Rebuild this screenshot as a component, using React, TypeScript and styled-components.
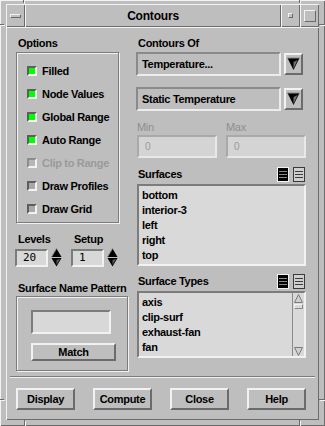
import React from "react";
import styled, { createGlobalStyle, css } from "styled-components";

const BG = "#bebebe";
const LIGHT = "#f2f2f2";
const DARK = "#6b6b6b";
const FIELD = "#d8d8d8";

const GlobalStyle = createGlobalStyle`
  html, body { margin: 0; padding: 0; background: ${BG}; }
  body { font-family: "Liberation Sans", Arial, sans-serif; }
`;

const sunken = css`
  box-sizing: border-box;
  border: 2px solid;
  border-color: #7c7c7c ${LIGHT} ${LIGHT} #7c7c7c;
`;

const raised = css`
  box-sizing: border-box;
  border: 2px solid;
  border-color: ${LIGHT} ${DARK} ${DARK} ${LIGHT};
`;

const Window = styled.div`
  position: relative;
  box-sizing: border-box;
  width: 325px;
  height: 426px;
  padding: 4px 6px 6px 6px;
  background: ${BG};
  display: flex;
  flex-direction: column;
  box-shadow: inset 1px 1px 0 ${LIGHT}, inset -1px -1px 0 ${DARK};
  font-family: "Liberation Sans", Arial, sans-serif;
  font-size: 11px;
  font-weight: bold;
  letter-spacing: -0.3px;
  color: #000;
`;

const FrameMark = styled.div<{ $l: number; $t: number; $w: number; $h: number }>`
  position: absolute;
  left: ${(p) => p.$l}px;
  top: ${(p) => p.$t}px;
  width: ${(p) => p.$w}px;
  height: ${(p) => p.$h}px;
  background: ${LIGHT};
  box-shadow: -1px -1px 0 ${DARK};
`;

const TitleBar = styled.div`
  display: flex;
  height: 23px;
  flex: none;
`;

const TitleCell = styled.div<{ $w?: number }>`
  box-sizing: border-box;
  ${(p) => (p.$w ? `width: ${p.$w}px; flex: none;` : "flex: 1;")}
  display: flex;
  align-items: center;
  justify-content: center;
  box-shadow: inset 1px 1px 0 ${LIGHT}, inset -1px -1px 0 ${DARK};
`;

const TitleText = styled.span`
  font-size: 12px;
  letter-spacing: -0.2px;
`;

const MenuGlyph = styled.span`
  box-sizing: border-box;
  width: 11px;
  height: 4px;
  border: 1px solid;
  border-color: ${LIGHT} ${DARK} ${DARK} ${LIGHT};
`;

const MinGlyph = styled.span`
  box-sizing: border-box;
  width: 5px;
  height: 5px;
  border: 1px solid;
  border-color: ${LIGHT} ${DARK} ${DARK} ${LIGHT};
`;

const MaxGlyph = styled.span`
  box-sizing: border-box;
  width: 12px;
  height: 12px;
  border: 1px solid;
  border-color: ${LIGHT} ${DARK} ${DARK} ${LIGHT};
`;

const Content = styled.div`
  flex: 1;
  display: flex;
  flex-direction: column;
  padding: 10px 13px 10px 10px;
  box-shadow: inset 1px 1px 0 ${LIGHT}, inset -1px -1px 0 ${DARK};
`;

const Main = styled.div`
  display: flex;
  gap: 8px;
`;

const LeftCol = styled.div`
  width: 112px;
  display: flex;
  flex-direction: column;
`;

const RightCol = styled.div`
  width: 170px;
  display: flex;
  flex-direction: column;
`;

const Label = styled.div<{ $mt?: number; $dim?: boolean }>`
  height: 13px;
  line-height: 13px;
  padding-left: 2px;
  white-space: nowrap;
  margin-top: ${(p) => p.$mt ?? 0}px;
  color: ${(p) => (p.$dim ? "#8e8e8e" : "#000")};
`;

const GroupFrame = styled.div<{ $w: number; $mt?: number }>`
  box-sizing: border-box;
  width: ${(p) => p.$w}px;
  margin-top: ${(p) => p.$mt ?? 0}px;
  border: 1px solid #7c7c7c;
  box-shadow: inset 1px 1px 0 ${LIGHT}, 1px 1px 0 ${LIGHT};
`;

const OptionsBody = styled.div`
  padding: 6px 0 2px 10px;
  display: flex;
  flex-direction: column;
`;

const CheckRow = styled.div<{ $disabled?: boolean }>`
  height: 23px;
  display: flex;
  align-items: center;
  gap: 5px;
  color: ${(p) => (p.$disabled ? "#9a9a9a" : "#000")};
`;

const CheckBox = styled.span<{ $on: boolean; $disabled?: boolean }>`
  box-sizing: border-box;
  width: 10px;
  height: 10px;
  flex: none;
  border: 2px solid;
  border-color: ${(p) =>
    p.$disabled
      ? `#8c8c8c ${LIGHT} ${LIGHT} #8c8c8c`
      : `#5e5e5e ${LIGHT} ${LIGHT} #5e5e5e`};
  background: ${(p) => (p.$on ? "#00ff00" : p.$disabled ? "#b6b6b6" : "#a8a8a8")};
`;

const SpinArea = styled.div`
  display: flex;
  gap: 10px;
  margin-top: 10px;
`;

const SpinGroup = styled.div`
  display: flex;
  flex-direction: column;
  gap: 2px;
`;

const SpinRow = styled.div`
  display: flex;
  align-items: center;
  gap: 3px;
  margin-left: -1px;
`;

const NumField = styled.div`
  ${sunken};
  width: 33px;
  height: 18px;
  background: ${FIELD};
  font-family: "DejaVu Sans Mono", "Liberation Mono", monospace;
  font-weight: normal;
  font-size: 11px;
  letter-spacing: 0;
  line-height: 14px;
  padding-left: 6px;
`;

const PatternBody = styled.div`
  padding: 13px 0 9px 14px;
  display: flex;
  flex-direction: column;
  gap: 9px;
`;

const TextField = styled.div`
  ${sunken};
  width: 80px;
  height: 24px;
  background: ${FIELD};
`;

const PushButton = styled.div<{ $w: number; $h: number }>`
  ${raised};
  width: ${(p) => p.$w}px;
  height: ${(p) => p.$h}px;
  display: flex;
  align-items: center;
  justify-content: center;
  background: ${BG};
`;

const OptionRow = styled.div<{ $mt?: number }>`
  display: flex;
  align-items: center;
  gap: 3px;
  margin-top: ${(p) => p.$mt ?? 0}px;
`;

const OptionField = styled.div`
  ${sunken};
  border-color: #8a8a8a #ececec #ececec #8a8a8a;
  width: 145px;
  height: 24px;
  padding-left: 4px;
  display: flex;
  align-items: center;
`;

const ArrowButton = styled.div`
  ${raised};
  width: 19px;
  height: 22px;
  display: flex;
  align-items: center;
  justify-content: center;
`;

const RangeRow = styled.div`
  display: flex;
  gap: 9px;
  margin-top: 10px;
  padding-left: 1px;
`;

const RangeGroup = styled.div`
  display: flex;
  flex-direction: column;
  gap: 1px;
`;

const RangeLabel = styled.div`
  height: 13px;
  line-height: 13px;
  color: #8e8e8e;
  font-weight: normal;
`;

const RangeField = styled.div`
  box-sizing: border-box;
  width: 80px;
  height: 23px;
  border: 2px solid;
  border-color: #a9a9a9 #e8e8e8 #e8e8e8 #a9a9a9;
  background: #d4d4d4;
  color: #9a9a9a;
  font-weight: normal;
  font-size: 10px;
  line-height: 19px;
  padding-left: 6px;
`;

const ListHeader = styled.div<{ $mt: number }>`
  display: flex;
  align-items: center;
  height: 16px;
  margin-top: ${(p) => p.$mt}px;
  padding-left: 2px;
`;

const HeaderLabel = styled.span`
  flex: 1;
`;

const IconGroup = styled.div`
  display: flex;
  gap: 4px;
  margin-right: 1px;
`;

const ListBox = styled.div<{ $h: number }>`
  ${sunken};
  margin-top: 2px;
  margin-left: 1px;
  width: 169px;
  height: ${(p) => p.$h}px;
  background: #d9d9d9;
  display: flex;
`;

const ListItems = styled.div`
  flex: 1;
  padding: 2px 0 0 3px;
`;

const ListItem = styled.div`
  height: 15px;
  line-height: 15px;
  white-space: nowrap;
`;

const ScrollBar = styled.div`
  width: 11px;
  border-left: 1px solid #8a8a8a;
  display: flex;
  flex-direction: column;
  align-items: center;
  padding-top: 1px;
`;

const Thumb = styled.div`
  box-sizing: border-box;
  width: 9px;
  height: 5px;
  margin-top: 1px;
  border: 1px solid;
  border-color: ${LIGHT} #8a8a8a #8a8a8a ${LIGHT};
`;

const ScrollSpacer = styled.div`
  flex: 1;
`;

const Separator = styled.div`
  margin: auto -9px 0 -6px;
  height: 0;
  border-top: 1px solid #7c7c7c;
  border-bottom: 1px solid ${LIGHT};
`;

const ButtonRow = styled.div`
  display: flex;
  justify-content: space-between;
  margin-top: 10px;
`;

const DownArrow = () => (
  <svg width="13" height="14" viewBox="0 0 13 14">
    <polygon points="0.5,1 12.5,1 6.5,13" fill="#000" />
    <polygon points="6.5,5 10.5,3 6.5,12" fill="#6e6e6e" />
    <line x1="0.5" y1="1" x2="12.5" y2="1" stroke="#8a8a8a" strokeWidth="1" />
  </svg>
);

const SpinArrows = () => (
  <svg width="11" height="19" viewBox="0 0 11 19">
    <polygon points="5.5,0.5 10.5,9 0.5,9" fill="#000" />
    <line x1="5.5" y1="0.5" x2="0.5" y2="9" stroke="#8a8a8a" strokeWidth="1" />
    <polygon points="0.5,10 10.5,10 5.5,18.5" fill="#000" />
    <polygon points="5.5,12 9,11 5.5,17" fill="#5a5a5a" />
  </svg>
);

const SelectAllIcon = () => (
  <svg width="12" height="15" viewBox="0 0 12 15">
    <rect x="0" y="0" width="12" height="15" fill="#f2f2f2" />
    <rect x="1" y="1" width="10" height="13" fill="#000" />
    <line x1="2" y1="4.5" x2="10" y2="4.5" stroke="#8a8a8a" />
    <line x1="2" y1="7.5" x2="10" y2="7.5" stroke="#8a8a8a" />
    <line x1="2" y1="10.5" x2="10" y2="10.5" stroke="#8a8a8a" />
  </svg>
);

const DeselectIcon = () => (
  <svg width="12" height="15" viewBox="0 0 12 15">
    <rect x="0.5" y="0.5" width="11" height="14" fill="#cfcfcf" stroke="#3a3a3a" />
    <line x1="2" y1="4.5" x2="10" y2="4.5" stroke="#3a3a3a" />
    <line x1="2" y1="7.5" x2="10" y2="7.5" stroke="#3a3a3a" />
    <line x1="2" y1="10.5" x2="10" y2="10.5" stroke="#3a3a3a" />
  </svg>
);

const ScrollUp = () => (
  <svg width="9" height="9" viewBox="0 0 9 9">
    <polygon points="4.5,0.5 8.5,8.5 0.5,8.5" fill="#d0d0d0" stroke="#7a7a7a" />
  </svg>
);

const ScrollDown = () => (
  <svg width="9" height="9" viewBox="0 0 9 9">
    <polygon points="0.5,0.5 8.5,0.5 4.5,8.5" fill="#d0d0d0" stroke="#7a7a7a" />
  </svg>
);

const options: { label: string; on: boolean; disabled?: boolean }[] = [
  { label: "Filled", on: true },
  { label: "Node Values", on: true },
  { label: "Global Range", on: true },
  { label: "Auto Range", on: true },
  { label: "Clip to Range", on: false, disabled: true },
  { label: "Draw Profiles", on: false },
  { label: "Draw Grid", on: false },
];

const surfaces = ["bottom", "interior-3", "left", "right", "top"];
const surfaceTypes = ["axis", "clip-surf", "exhaust-fan", "fan"];

export default function App() {
  return (
    <>
      <GlobalStyle />
      <Window>
        <FrameMark $l={24} $t={0} $w={1} $h={4} />
        <FrameMark $l={300} $t={0} $w={1} $h={4} />
        <FrameMark $l={25} $t={421} $w={1} $h={5} />
        <FrameMark $l={300} $t={421} $w={1} $h={5} />
        <FrameMark $l={0} $t={25} $w={5} $h={1} />
        <FrameMark $l={320} $t={25} $w={5} $h={1} />
        <FrameMark $l={0} $t={400} $w={5} $h={1} />
        <FrameMark $l={320} $t={400} $w={5} $h={1} />
        <TitleBar>
          <TitleCell $w={19}>
            <MenuGlyph />
          </TitleCell>
          <TitleCell>
            <TitleText>Contours</TitleText>
          </TitleCell>
          <TitleCell $w={19}>
            <MinGlyph />
          </TitleCell>
          <TitleCell $w={19}>
            <MaxGlyph />
          </TitleCell>
        </TitleBar>
        <Content>
          <Main>
            <LeftCol>
              <Label>Options</Label>
              <GroupFrame $w={103} $mt={2}>
                <OptionsBody>
                  {options.map((o) => (
                    <CheckRow key={o.label} $disabled={o.disabled}>
                      <CheckBox $on={o.on} $disabled={o.disabled} />
                      {o.label}
                    </CheckRow>
                  ))}
                </OptionsBody>
              </GroupFrame>
              <SpinArea>
                <SpinGroup>
                  <Label>Levels</Label>
                  <SpinRow>
                    <NumField>20</NumField>
                    <SpinArrows />
                  </SpinRow>
                </SpinGroup>
                <SpinGroup>
                  <Label>Setup</Label>
                  <SpinRow>
                    <NumField>1</NumField>
                    <SpinArrows />
                  </SpinRow>
                </SpinGroup>
              </SpinArea>
              <Label $mt={15}>Surface Name Pattern</Label>
              <GroupFrame $w={112} $mt={1}>
                <PatternBody>
                  <TextField />
                  <PushButton $w={85} $h={18}>Match</PushButton>
                </PatternBody>
              </GroupFrame>
            </LeftCol>
            <RightCol>
              <Label>Contours Of</Label>
              <OptionRow $mt={2}>
                <OptionField>Temperature...</OptionField>
                <ArrowButton>
                  <DownArrow />
                </ArrowButton>
              </OptionRow>
              <OptionRow $mt={11}>
                <OptionField>Static Temperature</OptionField>
                <ArrowButton>
                  <DownArrow />
                </ArrowButton>
              </OptionRow>
              <RangeRow>
                <RangeGroup>
                  <RangeLabel>Min</RangeLabel>
                  <RangeField>0</RangeField>
                </RangeGroup>
                <RangeGroup>
                  <RangeLabel>Max</RangeLabel>
                  <RangeField>0</RangeField>
                </RangeGroup>
              </RangeRow>
              <ListHeader $mt={8}>
                <HeaderLabel>Surfaces</HeaderLabel>
                <IconGroup>
                  <SelectAllIcon />
                  <DeselectIcon />
                </IconGroup>
              </ListHeader>
              <ListBox $h={82}>
                <ListItems>
                  {surfaces.map((s) => (
                    <ListItem key={s}>{s}</ListItem>
                  ))}
                </ListItems>
              </ListBox>
              <ListHeader $mt={7}>
                <HeaderLabel>Surface Types</HeaderLabel>
                <IconGroup>
                  <SelectAllIcon />
                  <DeselectIcon />
                </IconGroup>
              </ListHeader>
              <ListBox $h={67}>
                <ListItems>
                  {surfaceTypes.map((s) => (
                    <ListItem key={s}>{s}</ListItem>
                  ))}
                </ListItems>
                <ScrollBar>
                  <ScrollUp />
                  <Thumb />
                  <ScrollSpacer />
                  <ScrollDown />
                </ScrollBar>
              </ListBox>
            </RightCol>
          </Main>
          <Separator />
          <ButtonRow>
            <PushButton $w={59} $h={22}>Display</PushButton>
            <PushButton $w={59} $h={22}>Compute</PushButton>
            <PushButton $w={59} $h={22}>Close</PushButton>
            <PushButton $w={59} $h={22}>Help</PushButton>
          </ButtonRow>
        </Content>
      </Window>
    </>
  );
}
